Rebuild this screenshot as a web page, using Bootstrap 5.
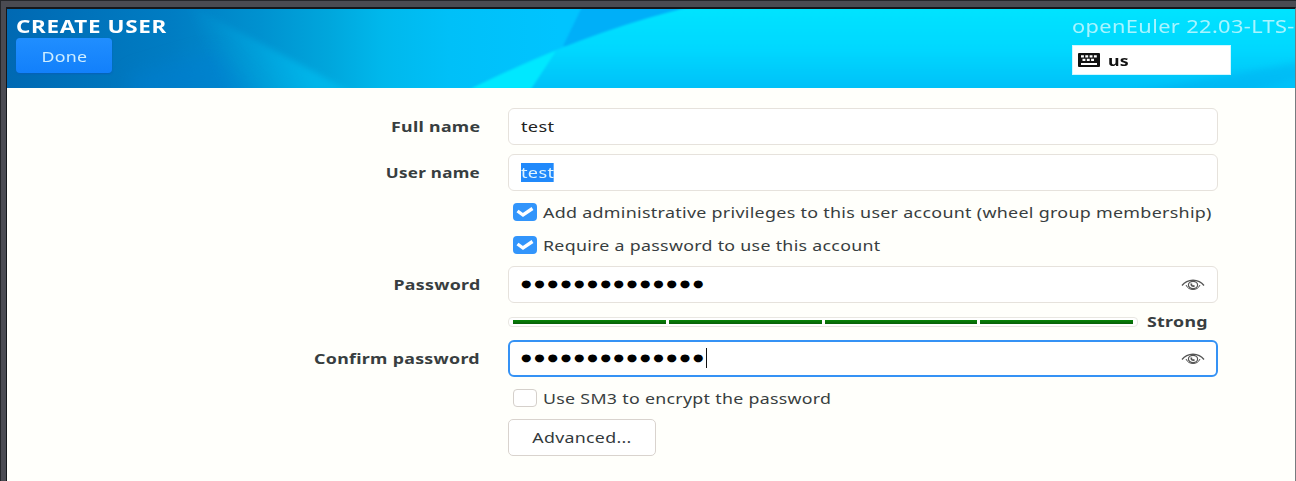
<!DOCTYPE html>
<html lang="en">
<head>
<meta charset="utf-8">
<title>Create User</title>
<link href="https://cdn.jsdelivr.net/npm/bootstrap@5.3.0/dist/css/bootstrap.min.css" rel="stylesheet">
<style>
body{height:481px;overflow:hidden;background:#fffffb;font-family:"Noto Sans",sans-serif;font-size:15px;line-height:20px;color:#383e40}
.frame{height:481px;padding:6px 0 0 5px;background:#4a4b52;border:solid #25272b;border-width:1px 0 0 1px}
.window{height:474px;border:solid #15181c;border-width:2px 1px 0 1px;border-right-color:#777c80;background:#fffffb;overflow:hidden}
.banner{height:79px;position:relative}
.banner>svg{position:absolute;inset:0}
.banner-left,.banner-right{position:relative}
.banner-left{padding:7px 0 0 9px}
.banner-right{width:223px;padding-top:7px}
.wide{display:inline-block;white-space:nowrap;letter-spacing:.25px;transform-origin:0 50%;transform:scaleX(1.185)}
main .wide:not(.selected-text){translate:0 -1px}
.from-right{transform-origin:100% 50%}
.from-mid{transform-origin:50% 50%}
.page-title{font-size:17px;height:22px;line-height:22px;letter-spacing:.5px;transform:scaleX(1.32)}
.product{width:179px;height:20px;font-size:17.5px;letter-spacing:.3px;color:#a8f4ff;transform:scaleX(1.245)}
.done{width:96px;height:35px;padding:0;border:0;border-radius:4px;background:linear-gradient(#208eff,#1280fb);color:#cfeeff;font-size:15px;line-height:20px;box-shadow:0 1px 2px #0760b8}
.done:hover{color:#cfeeff}
.layout{width:159px;height:30px;margin-top:9px;background:#fff;border:1px solid #cff7ff;color:#111;padding-left:5px}
.caption-col{width:473px;margin-right:28px;text-align:right;font-weight:700}
.field{width:710px}
.entry{height:37px;padding:0 12px;border:1px solid #e6e2dc;border-radius:6px;background:#fff;color:#222;display:flex;align-items:center}
.entry.active-entry{border:2px solid #3592f5;padding:0 11px}
.short{transform:scaleX(1.21)}
.selected-text{background:#2089fb;color:#dff4ff;line-height:19px}
main .dots{width:154px;font-family:"DejaVu Sans",sans-serif;font-size:10px;letter-spacing:2.3px;color:#000;transform:scaleX(1.2)}
.caret{width:1px;height:20px;background:#111;margin:0 0 2px 31px}
.option{height:33px;padding-left:5px}
.box{width:24px;height:18px;border-radius:4px;background:#3295fb;margin:0 6px 1px 0;display:flex;align-items:center;justify-content:center}
.box.off{background:#fff;border:1px solid #d5d0cb}
.long{transform:scaleX(1.191)}
.meter{width:630px;height:10px;border:1px solid #e9e7e2;border-radius:4px;background:#fff;padding:0 4px;gap:3px}
.meter i{flex:1;height:4px;background:linear-gradient(#078508,#086008)}
.advanced{width:148px;height:37px;padding:0;background:#fff;border:1px solid #d9d3ce;border-radius:5px;color:#33393b;font-size:15px;line-height:20px}
</style>
</head>
<body>
<div class="frame"><div class="window">
<header class="banner d-flex justify-content-between">
<svg width="1288" height="79" viewBox="7 9 1288 79" aria-hidden="true">
<defs>
<linearGradient id="base" gradientUnits="userSpaceOnUse" x1="7" y1="0" x2="560" y2="0"><stop offset="0" stop-color="#0069b3"/><stop offset=".3" stop-color="#007dc3"/><stop offset=".46" stop-color="#0092d0"/><stop offset=".58" stop-color="#00a6dc"/><stop offset=".68" stop-color="#00b8ec"/><stop offset=".8" stop-color="#00c0f8"/><stop offset="1" stop-color="#00c4ff"/></linearGradient>
<linearGradient id="cyan" x1="0" y1="0" x2="0" y2="1"><stop offset="0" stop-color="#00e4ff"/><stop offset=".5" stop-color="#00d8ff"/><stop offset="1" stop-color="#00c0f8"/></linearGradient>
<linearGradient id="ray" gradientUnits="userSpaceOnUse" x1="215" y1="75" x2="295" y2="40"><stop offset="0" stop-color="#00b0e8" stop-opacity="0"/><stop offset="1" stop-color="#00bdf0"/></linearGradient>
<filter id="soft" x="-30%" y="-30%" width="160%" height="160%"><feGaussianBlur stdDeviation="9"/></filter>
<filter id="mid" x="-20%" y="-20%" width="140%" height="140%"><feGaussianBlur stdDeviation="3"/></filter>
<filter id="edge"><feGaussianBlur stdDeviation=".8"/></filter>
</defs>
<path fill="url(#base)" d="M7 9h1289v79H7z"/>
<path fill="#007fd2" opacity=".5" filter="url(#soft)" d="M130 75L215 50L265 100H130z"/>
<path fill="url(#ray)" opacity=".7" filter="url(#mid)" d="M180 0L352 92H215z"/>
<path fill="#00aff8" filter="url(#edge)" d="M582 7L563 46 600 62 684 7z"/>
<path fill="url(#cyan)" filter="url(#edge)" d="M466 90Q590 30 690 7H1310V90z"/>
<path fill="#00e8ff" filter="url(#edge)" d="M470 89Q520 65 556 51L531 89z"/>
<path fill="#00a8ec" opacity=".35" filter="url(#mid)" d="M1120 94L1300 62V78L1240 94z"/>
</svg>
<div class="banner-left">
<div class="wide page-title fw-bold text-white d-block">CREATE USER</div>
<button class="btn done d-block"><span class="wide from-mid">Done</span></button>
</div>
<div class="banner-right">
<div class="wide product d-block">openEuler 22.03-LTS-</div>
<div class="layout d-flex align-items-center gap-2">
<svg width="22" height="14" viewBox="0 0 22 14"><rect width="22" height="14" rx="1" fill="#111"/><path stroke="#fff" stroke-width="2.2" stroke-dasharray="2.9 1.4" d="M3 3.3h16M4.5 6.8h12"/><path stroke="#fff" stroke-width="2" d="M3 11h16"/></svg>
<span class="wide fw-bold">us</span></div>
</div>
</header>
<main>
<div class="d-flex align-items-center" style="margin-top:20px"><label class="caption-col"><span class="wide from-right">Full name</span></label><div class="field entry"><span class="wide short">test</span></div></div>
<div class="d-flex align-items-center" style="margin-top:9px"><label class="caption-col"><span class="wide from-right" style="transform:scaleX(1.135)">User name</span></label><div class="field entry"><span class="wide short selected-text">test</span></div></div>
<div class="d-flex" style="padding-top:5px"><div class="caption-col"></div><div class="field">
<div class="option d-flex align-items-center"><span class="box"><svg width="18" height="12" viewBox="0 0 18 12"><path d="M1.5 5l5.5 4L16.5 2.5" fill="none" stroke="#fff" stroke-width="3.4"/></svg></span><span class="wide long">Add administrative privileges to this user account (wheel group membership)</span></div>
<div class="option d-flex align-items-center"><span class="box"><svg width="18" height="12" viewBox="0 0 18 12"><path d="M1.5 5l5.5 4L16.5 2.5" fill="none" stroke="#fff" stroke-width="3.4"/></svg></span><span class="wide">Require a password to use this account</span></div>
</div></div>
<div class="d-flex align-items-center" style="margin-top:4px"><label class="caption-col"><span class="wide from-right">Password</span></label><div class="field entry"><span class="wide dots">●●●●●●●●●●●●●●</span>
<svg class="ms-auto" width="24" height="12" viewBox="0 0 24 12" fill="none" stroke="#555"><path stroke-width="1.3" d="M1 6.5Q5 1.5 12 1.2 19 1.5 23 6.5"/><path stroke-width="1" d="M5 6Q7 10.5 12 10.5T19 6"/><ellipse cx="12" cy="6" rx="4.6" ry="3.6" stroke-width="1.2"/><path stroke-width="1.8" d="M10.5 4.5Q9.5 7.5 13.5 7"/></svg></div></div>
<div class="d-flex" style="height:37px"><div class="caption-col"></div><div class="field d-flex align-items-center"><div class="meter d-flex align-items-center"><i></i><i></i><i></i><i></i></div><span class="wide fw-bold" style="margin-left:9px">Strong</span></div></div>
<div class="d-flex align-items-center"><label class="caption-col"><span class="wide from-right">Confirm password</span></label><div class="field entry active-entry"><span class="wide dots">●●●●●●●●●●●●●●</span><span class="caret"></span>
<svg class="ms-auto" width="24" height="12" viewBox="0 0 24 12" fill="none" stroke="#555"><path stroke-width="1.3" d="M1 6.5Q5 1.5 12 1.2 19 1.5 23 6.5"/><path stroke-width="1" d="M5 6Q7 10.5 12 10.5T19 6"/><ellipse cx="12" cy="6" rx="4.6" ry="3.6" stroke-width="1.2"/><path stroke-width="1.8" d="M10.5 4.5Q9.5 7.5 13.5 7"/></svg></div></div>
<div class="d-flex" style="padding-top:5px"><div class="caption-col"></div><div class="field">
<div class="option d-flex align-items-center"><span class="box off"></span><span class="wide">Use SM3 to encrypt the password</span></div>
<button class="btn advanced d-block mt-1"><span class="wide from-mid">Advanced...</span></button>
</div></div>
</main>
</div></div>
<script src="https://cdn.jsdelivr.net/npm/bootstrap@5.3.0/dist/js/bootstrap.bundle.min.js"></script>
</body>
</html>
